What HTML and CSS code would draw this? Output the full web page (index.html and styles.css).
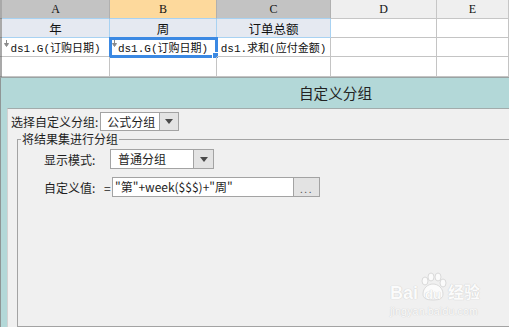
FILE: index.html
```html
<!DOCTYPE html>
<html lang="zh-CN">
<head>
  <meta charset="UTF-8" />
  <meta name="viewport" content="width=device-width, initial-scale=1.0"/>
  <title>自定义分组</title>
  <link rel="stylesheet" href="styles.css">
</head>
<body>

  <div class="sheet">
    <div class="gutter"></div>
    <div class="colhead">A</div>
    <div class="colhead active">B</div>
    <div class="colhead">C</div>
    <div class="colhead light">D</div>
    <div class="colhead light">E</div>

    <div class="gutter"></div>
    <div class="cell title-cell">年</div>
    <div class="cell title-cell">周</div>
    <div class="cell title-cell">订单总额</div>
    <div class="cell"></div>
    <div class="cell"></div>

    <div class="gutter"></div>
    <div class="cell data">
      <svg class="expand" width="5" height="7" viewBox="0 0 5 7"><path d="M2.5 0v4M0.5 3.5l2 3 2-3z" stroke="#8a8a8a" fill="#8a8a8a" stroke-width="1"/></svg>
      ds1.G(订购日期)
    </div>
    <div class="cell data selected">
      <svg class="expand" width="5" height="7" viewBox="0 0 5 7"><path d="M2.5 0v4M0.5 3.5l2 3 2-3z" stroke="#8a8a8a" fill="#8a8a8a" stroke-width="1"/></svg>
      ds1.G(订购日期)
    </div>
    <div class="cell data">ds1.求和(应付金额)</div>
    <div class="cell"></div>
    <div class="cell"></div>

    <div class="gutter"></div>
    <div class="cell"></div>
    <div class="cell"></div>
    <div class="cell"></div>
    <div class="cell"></div>
    <div class="cell"></div>
  </div>

  <div class="dialog">
    <div class="dialog-title">自定义分组</div>
    <div class="client">
      <div class="top-row">
        <span class="label">选择自定义分组:</span>
        <div class="combo">
          <span class="combo-text">公式分组</span>
          <span class="combo-btn"><i class="arrow"></i></span>
        </div>
      </div>

      <fieldset class="group">
        <legend>将结果集进行分组</legend>
        <div class="field">
          <span class="flabel">显示模式:</span>
          <div class="combo wide">
            <span class="combo-text">普通分组</span>
            <span class="combo-btn"><i class="arrow"></i></span>
          </div>
        </div>
        <div class="field">
          <span class="flabel short">自定义值:</span>
          <span class="eq">=</span>
          <div class="formula">"第"+week($$$)+"周"</div>
          <div class="more">...</div>
        </div>
      </fieldset>
    </div>
  </div>

  <div class="watermark">
    <div class="wm-logo">
      <span>Bai</span>
      <span class="paw">
        <svg width="28" height="30" viewBox="0 0 28 30">
          <g fill="#fbfbfb" stroke="#dadada" stroke-width="1">
            <ellipse cx="6" cy="9" rx="3" ry="4"/>
            <ellipse cx="12" cy="5" rx="3" ry="4"/>
            <ellipse cx="19" cy="5" rx="3" ry="4"/>
            <ellipse cx="24" cy="11" rx="3" ry="4"/>
            <path d="M4 22c0-6 5-10 10-10s10 4 10 10c0 4-3 6-10 6S4 26 4 22z"/>
          </g>
        </svg>
        <b>du</b>
      </span>
      <span>经验</span>
    </div>
    <div class="wm-url">jingyan.baidu.com</div>
  </div>

</body>
</html>
```

FILE: styles.css
```css
* {
  box-sizing: border-box;
}

body {
  margin: 0;
  width: 509px;
  height: 327px;
  overflow: hidden;
  background: #f0f0f0;
  font-family: "Noto Sans CJK SC", "Liberation Sans", sans-serif;
  font-size: 12px;
  color: #1e1e1e;
  position: relative;
}

/* spreadsheet */

.sheet {
  display: grid;
  grid-template-columns: 2px 108px 107px 114px 106px 72px;
  grid-template-rows: 19px 19px 19px 20px;
  background: #fff;
  font-family: "Liberation Mono", "Noto Sans CJK SC", monospace;
  font-size: 11px;
}

.gutter {
  background: #a9a9a9;
  border-bottom: 1px solid #8c8c8c;
}

.colhead {
  background: #c3c3c3;
  border-right: 1px solid #b0b0b0;
  border-bottom: 1px solid #a8d2f2;
  display: flex;
  align-items: center;
  justify-content: center;
  font-family: "Liberation Serif", serif;
  font-size: 12px;
  color: #111;
}

.colhead.active {
  background: #fdd99c;
}

.colhead.light {
  background: #efefef;
  border-right-color: #c6c6c6;
  border-bottom-color: #c6c6c6;
}

.cell {
  border-right: 1px solid #c4c4c4;
  border-bottom: 1px solid #c4c4c4;
  display: flex;
  align-items: center;
  justify-content: center;
  white-space: nowrap;
  position: relative;
  color: #111;
}

.title-cell {
  background: #e5e9f1;
  border-right-color: #a8d2f2;
  border-bottom-color: #a8d2f2;
  font-family: "Noto Sans CJK SC", sans-serif;
  font-size: 12.5px;
}

.expand {
  position: absolute;
  left: 2px;
  top: 2px;
}

.selected {
  outline: 3px solid #3b89e3;
  outline-offset: -2px;
}

.selected::after {
  content: "";
  position: absolute;
  right: -3px;
  bottom: -3px;
  width: 5px;
  height: 5px;
  background: #3b89e3;
  border: 1px solid #fff;
}

/* dialog */

.dialog {
  height: 250px;
  background: #b3d8d8;
  border-top: 1px solid #9aa3a3;
  border-left: 1px solid #8f9696;
  display: flex;
  flex-direction: column;
}

.dialog-title {
  height: 30px;
  line-height: 30px;
  padding-left: 298px;
  font-size: 14.6px;
  color: #222;
}

.client {
  flex: 1;
  margin-left: 6px;
  background: #f0f0f0;
  border-top: 1px solid #a2abab;
  border-left: 1px solid #d2d2d2;
  padding: 3px 0 0 3px;
  display: flex;
  flex-direction: column;
}

.top-row {
  display: flex;
  align-items: center;
  gap: 2px;
}

.combo {
  display: flex;
  height: 19px;
  border: 1px solid #a3a3a3;
  background: #fff;
}

.combo-text {
  width: 58px;
  padding-left: 6px;
  line-height: 17px;
}

.combo-btn {
  width: 19px;
  background: #e3e3e3;
  border-left: 1px solid #a3a3a3;
  display: flex;
  align-items: center;
  justify-content: center;
}

.arrow {
  width: 0;
  height: 0;
  border-left: 4px solid transparent;
  border-right: 4px solid transparent;
  border-top: 5px solid #4a4a4a;
}

.combo.wide {
  height: 20px;
  margin-left: 6px;
}

.combo.wide .combo-text {
  width: 82px;
  padding-left: 7px;
  line-height: 18px;
}

.combo.wide .combo-btn {
  width: 20px;
}

.group {
  margin: 0 0 0 6px;
  width: 494px;
  flex: 1;
  border: 1px solid #a3a3a3;
  border-right: none;
  padding: 2px 0 0 3px;
  min-width: 0;
}

.group legend {
  padding: 0 1px;
  line-height: 16px;
}

.field {
  display: flex;
  align-items: center;
  padding-left: 23px;
  margin-bottom: 8px;
}

.flabel {
  width: 60px;
}

.eq {
  width: 8px;
}

.formula {
  width: 182px;
  height: 20px;
  line-height: 18px;
  background: #fff;
  border: 1px solid #a3a3a3;
  padding-left: 2px;
  font-size: 12px;
}

.more {
  width: 26px;
  height: 20px;
  background: #e3e3e3;
  border: 1px solid #a3a3a3;
  border-left: none;
  text-align: center;
  font-size: 10px;
  line-height: 22px;
  letter-spacing: 1.5px;
  color: #555;
}

/* watermark */

.watermark {
  position: absolute;
  left: 390px;
  top: 270px;
  color: #fbfbfb;
  text-shadow: 0 0 1px #cfcfcf, 0 0 1px #cfcfcf;
  font-family: "Liberation Sans", "Noto Sans CJK SC", sans-serif;
}

.wm-logo {
  display: flex;
  align-items: flex-end;
  font-size: 18px;
  font-weight: bold;
  line-height: 18px;
  height: 32px;
}

.paw {
  position: relative;
  width: 28px;
  height: 30px;
  margin: 0 1px;
}

.paw svg {
  position: absolute;
  left: 0;
  top: 0;
}

.paw b {
  position: absolute;
  left: 6px;
  bottom: 1px;
  font-size: 13px;
  line-height: 13px;
}

.wm-logo span:last-child {
  font-size: 16px;
}

.wm-url {
  font-size: 10.5px;
  margin-top: 3px;
  letter-spacing: 0.2px;
}
```
